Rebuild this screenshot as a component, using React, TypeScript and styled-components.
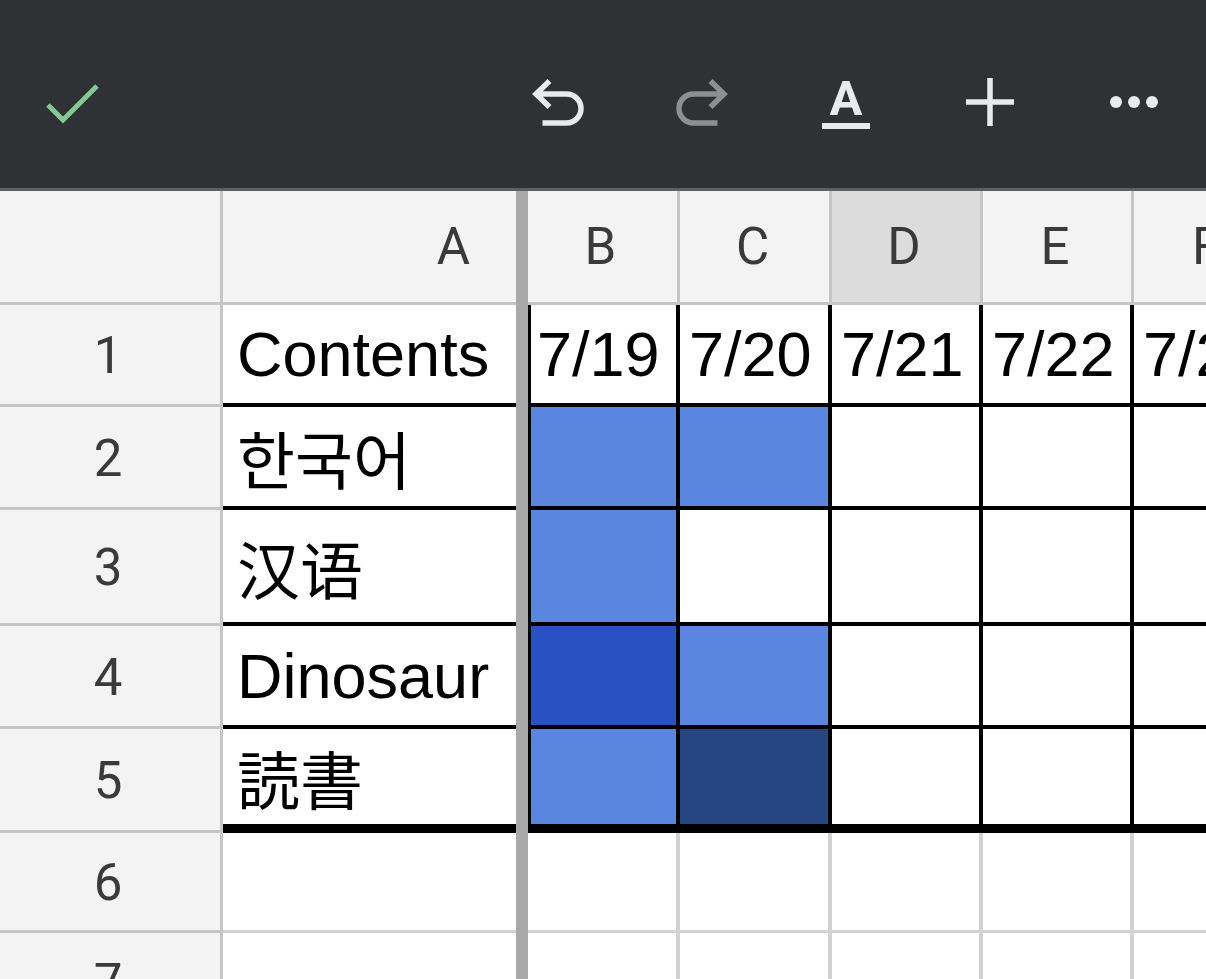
import React from 'react'
import styled, { createGlobalStyle } from 'styled-components'

// ----- Types & Interfaces -----

interface DataRow {
  label: string
  cjk?: string
  fills: (string | null)[]
}

// ----- Data -----

const LIGHT = '#5b86e0'
const MID = '#2852c4'
const DARK = '#264681'

const columns = ['B', 'C', 'D', 'E', 'F']
const dates = ['7/19', '7/20', '7/21', '7/22', '7/23']

const rows: DataRow[] = [
  { label: '한국어', cjk: '"Noto Sans CJK KR"', fills: [LIGHT, LIGHT, null, null, null] },
  { label: '汉语', cjk: '"Noto Sans CJK SC"', fills: [LIGHT, null, null, null, null] },
  { label: 'Dinosaur', fills: [MID, LIGHT, null, null, null] },
  { label: '読書', cjk: '"Noto Sans CJK JP"', fills: [LIGHT, DARK, null, null, null] },
]

// ----- Styles -----

const GlobalStyle = createGlobalStyle`
  html, body {
    margin: 0;
    padding: 0;
    background: #fff;
    overflow: hidden;
  }
  * {
    box-sizing: border-box;
  }
`

const Page = styled.div`
  width: 1206px;
  height: 979px;
  overflow: hidden;
`

const Toolbar = styled.div`
  display: flex;
  align-items: center;
  height: 191px;
  padding-top: 16px;
  background: #303134;
  border-bottom: 3px solid #5e5f62;
`

const Slot = styled.div`
  display: flex;
  align-items: center;
  justify-content: center;
  width: 144px;
  height: 60px;
`

const ToolGroup = styled.div`
  display: flex;
  margin-left: auto;
`

const FormatA = styled.div`
  display: flex;
  flex-direction: column;
  align-items: center;
  margin-top: 4px;
`

const FormatLetter = styled.span`
  font-family: Roboto, 'Liberation Sans', sans-serif;
  font-weight: 700;
  font-size: 49px;
  line-height: 40px;
  height: 40px;
  color: #e8eaed;
`

const FormatBar = styled.span`
  width: 48px;
  height: 6px;
  margin-top: 4px;
  background: #e8eaed;
`

const Dots = styled.div`
  display: flex;
  gap: 6px;
`

const Dot = styled.span`
  width: 12px;
  height: 12px;
  border-radius: 50%;
  background: #e8eaed;
`

const Sheet = styled.div`
  display: grid;
  width: max-content;
  grid-template-columns: 223px 293px 12px 152px 152px 151px 151px 151px;
  grid-template-rows: 114px 102px 103px 116px 103px 104px 100px 100px;
`

const FreezeBar = styled.div`
  grid-column: 3;
  grid-row: 1 / span 8;
  background: #a9a9a9;
`

const HeadCell = styled.div<{ $active?: boolean; $right?: boolean }>`
  display: flex;
  align-items: center;
  justify-content: ${p => (p.$right ? 'flex-end' : 'center')};
  padding-right: ${p => (p.$right ? '46px' : '4px')};
  background: ${p => (p.$active ? '#dcdcdc' : '#f3f3f3')};
  border-right: ${p => (p.$right ? 'none' : '3px solid #c6c6c6')};
  border-bottom: 3px solid #c6c6c6;
  font-family: Roboto, 'Liberation Sans', sans-serif;
  font-size: 51px;
  color: #3a3a3a;
  overflow: hidden;
  white-space: nowrap;
`

const Corner = styled(HeadCell)`
  justify-content: center;
`

const RowNum = styled(HeadCell)`
  padding-right: 4px;
  padding-top: 2px;
`

const Cell = styled.div<{
  $fill?: string | null
  $line: string
  $bottom: number
  $first?: boolean
  $noRight?: boolean
  $cjk?: string
}>`
  display: flex;
  align-items: center;
  padding: 0 0 0 ${p => (p.$first ? '6px' : '9px')};
  background: ${p => p.$fill ?? '#fff'};
  border-bottom: ${p => p.$bottom}px solid ${p => p.$line};
  border-right: ${p => (p.$noRight ? 'none' : `4px solid ${p.$line}`)};
  border-left: ${p => (p.$first ? `3px solid ${p.$line}` : 'none')};
  font-family: 'Liberation Sans', Arial, ${p => p.$cjk ?? '"Noto Sans CJK SC"'}, sans-serif;
  font-size: 63px;
  color: #000;
  overflow: hidden;
  white-space: nowrap;
`

const LabelCell = styled(Cell)`
  padding-left: 14px;
`

const EmptyCell = styled.div<{ $noRight?: boolean }>`
  background: #fff;
  border-bottom: 3px solid #d2d2d2;
  border-right: ${p => (p.$noRight ? 'none' : '4px solid #d2d2d2')};
`

// ----- Icons -----

const CheckIcon = () => (
  <svg width="60" height="50" viewBox="0 0 60 50">
    <path d="M6 28 L21 43 L55 9" fill="none" stroke="#81c995" strokeWidth="5" />
  </svg>
)

const UndoIcon = ({ color, flip }: { color: string; flip?: boolean }) => (
  <svg
    width="52"
    height="50"
    viewBox="0 0 52 50"
    style={flip ? { transform: 'scaleX(-1)' } : undefined}
  >
    <path
      d="M17.5 4 L4 17 L17.5 30 M4 17 H34.5 A14.5 14.5 0 0 1 34.5 46 H10.5"
      fill="none"
      stroke={color}
      strokeWidth="5.5"
    />
  </svg>
)

const PlusIcon = () => (
  <svg width="50" height="50" viewBox="0 0 50 50">
    <path d="M25 1 V49 M1 25 H49" stroke="#e8eaed" strokeWidth="5.5" />
  </svg>
)

// ----- Component Logic ------

const App: React.FC = () => {
  return (
    <Page>
      <GlobalStyle />
      <Toolbar>
        <Slot>
          <CheckIcon />
        </Slot>
        <ToolGroup>
          <Slot>
            <UndoIcon color="#e8eaed" />
          </Slot>
          <Slot>
            <UndoIcon color="#8e8f91" flip />
          </Slot>
          <Slot>
            <FormatA>
              <FormatLetter>A</FormatLetter>
              <FormatBar />
            </FormatA>
          </Slot>
          <Slot>
            <PlusIcon />
          </Slot>
          <Slot>
            <Dots>
              <Dot />
              <Dot />
              <Dot />
            </Dots>
          </Slot>
        </ToolGroup>
      </Toolbar>

      <Sheet>
        <FreezeBar />

        {/* header row */}
        <Corner />
        <HeadCell $right>A</HeadCell>
        {columns.map(c => (
          <HeadCell key={c} $active={c === 'D'}>
            {c}
          </HeadCell>
        ))}

        {/* row 1: titles */}
        <RowNum>1</RowNum>
        <LabelCell $line="#000" $bottom={4} $noRight>
          Contents
        </LabelCell>
        {dates.map((d, i) => (
          <Cell key={d} $line="#000" $bottom={4} $first={i === 0}>
            {d}
          </Cell>
        ))}

        {/* rows 2-5 */}
        {rows.map((r, ri) => {
          const last = ri === rows.length - 1
          return (
            <React.Fragment key={r.label}>
              <RowNum>{ri + 2}</RowNum>
              <LabelCell $line="#000" $bottom={last ? 9 : 4} $noRight $cjk={r.cjk}>
                {r.label}
              </LabelCell>
              {r.fills.map((f, ci) => (
                <Cell
                  key={ci}
                  $fill={f}
                  $line="#000"
                  $bottom={last ? 9 : 4}
                  $first={ci === 0}
                />
              ))}
            </React.Fragment>
          )
        })}

        {/* empty rows */}
        {[6, 7].map(n => (
          <React.Fragment key={n}>
            <RowNum>{n}</RowNum>
            <EmptyCell $noRight />
            {columns.map(c => (
              <EmptyCell key={c} />
            ))}
          </React.Fragment>
        ))}
      </Sheet>
    </Page>
  )
}

export default App
